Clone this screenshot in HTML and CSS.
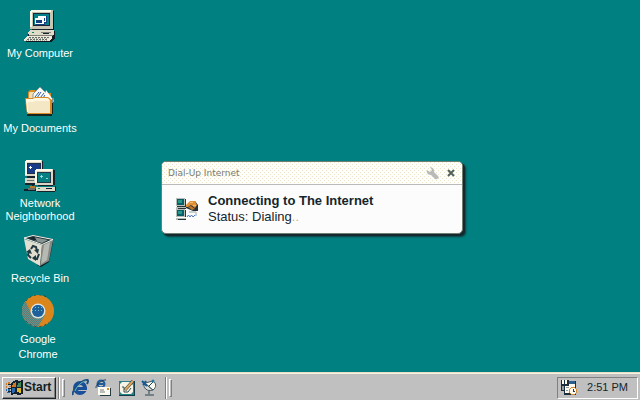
FILE: index.html
```html
<!DOCTYPE html>
<html lang="en">
<head>
<meta charset="utf-8">
<title>Desktop</title>
<link rel="stylesheet" href="styles.css">
</head>
<body>
<main class="desktop">
  <nav class="shortcuts">
    <a class="shortcut" href="#computer">
      <svg class="icon" viewBox="0 0 32 32" shape-rendering="crispEdges">
        <path fill="#111a22" d="M28 1h2v19h-2zM8 19h21v2H8zM30 21h1v7l-4 4H2v-1h24z"/>
        <path fill="#c8c5b5" d="M7 0h21l1 1v18H6V1z"/>
        <path fill="#fbf8ea" d="M7 0h20v2H8v15H6V1z"/>
        <path fill="#1b2430" d="M9 3h17v13H9z"/>
        <path fill="#04808a" d="M10 4h15v11H10z"/>
        <path fill="#14407f" d="M14 6h9v7h-2v2h-9V8h2z"/>
        <path fill="#fff" d="M14 6h8v6h-2v2h-9V8h3z"/>
        <path fill="#14407f" d="M15 8h6v3h-1V8h-5zM12 10h6v3h-6z"/>
        <path fill="#dedbc9" d="M6 20h24v5H4v-3z"/>
        <path fill="#7d8077" d="M17 22h10v1H17zM5 25h24v1H5z"/>
        <path fill="#14202a" d="M19 23h6v1h-6zM3 26h1v-2h1v2zM9 19h15v1H9z"/>
        <path fill="#0b8b58" d="M8 22h2v1H8z"/>
        <path fill="#eeebdd" d="M4 26h24v2l-3 3H0v-2z"/>
        <path stroke="#626b68" stroke-dasharray="2 1" d="M5 27.500h20M3 29.500h20"/>
        <path stroke="#a5a899" stroke-dasharray="1 1" d="M4 28.500h20M2 30.500h22"/>
      </svg>
      <span>My Computer</span>
    </a>
    <a class="shortcut" href="#documents">
      <svg class="icon" viewBox="0 0 32 32">
        <path fill="#15251f" d="M3 29h25v2H3zM27 16h2v13h-2z"/>
        <path fill="#d98a25" d="M4 7l2-2h5l2 3h14v21H4z"/>
        <path fill="#f7ddb0" d="M6 7h5l2 3h12v5H5V8z"/>
        <path fill="#f9f9f5" stroke="#879998" d="M9 9l7-7 12 12-5 4H9z"/>
        <path fill="none" stroke="#315baa" d="M11 12l4-5M13 13l4-6M16 13l4-5M19 13l2-3M22 13l1-2"/>
        <path fill="#fff" d="M22 5l8 11-3 3-6-9z"/>
        <path fill="#d98a25" d="M1 13h8l2-1h13l4 3v14H3z"/>
        <path fill="#f4e7c6" d="M2 14h7l2-1h12l3 2v13H4z"/>
        <path fill="#fff8e1" d="M2 14h7l2-1h12l2 1v2H11l-2 1H4v10H3z"/>
        <path fill="#87908c" d="M28 13h2v2h-1v2h-2v-2h1z"/>
      </svg>
      <span>My Documents</span>
    </a>
    <a class="shortcut" href="#network">
      <svg class="icon" viewBox="0 0 32 32" shape-rendering="crispEdges">
        <path fill="#17212b" d="M18 1h1v17H3v-2h15zM1 23h12v2H1zM8 24h2v4H8zM0 29h14v2H0z"/>
        <path fill="#dad6c6" d="M2 0h16v16H1V1z"/>
        <path fill="#fff9ea" d="M2 0h15v2H3v13H1V1z"/>
        <path fill="#222d48" d="M3 3h14v11H3z"/>
        <path fill="#173c8a" d="M4 4h12v9H4z"/>
        <path fill="#fff" d="M6 6h1v1h1v1H7v1H6V8H5V7h1z"/>
        <path fill="#d7d4c5" d="M1 18h13v5H1z"/>
        <path fill="#6b706b" d="M3 20h7v1H3zM4 28h7v2H4z"/>
        <path fill="#17212b" d="M29 10h2v15h-2zM14 24h15v2H14zM31 26h1v5l-2 1H13v-1h17z"/>
        <path fill="#dad6c6" d="M12 9h17v16H11V10z"/>
        <path fill="#fff9ea" d="M12 9h16v2H13v12h-2V10z"/>
        <path fill="#203b48" d="M13 12h14v11H13z"/>
        <path fill="#067f82" d="M14 13h12v9H14z"/>
        <path fill="#89dedb" d="M17 15h1v1h1v1h-1v1h-1v-1h-1v-1h1zM22 18h2v1h-2z"/>
        <path fill="#dedac9" d="M12 27h19v4H12z"/>
        <path fill="#17212b" d="M22 28h6v1h-6z"/>
        <path fill="#12935c" d="M14 28h2v1h-2z"/>
        <path fill="#b67a2c" d="M6 26h5v2H6z"/>
      </svg>
      <span>Network<br>Neighborhood</span>
    </a>
    <a class="shortcut" href="#recycle">
      <svg class="icon" viewBox="0 0 32 32">
        <path fill="#111c20" d="M27 8l2-1-4 20-8 5-4-2z"/>
        <path fill="#e2ded0" d="M0 4l18 6-2 21-12-7z"/>
        <path fill="#858a86" d="M18 10l11-5-4 21-9 5z"/>
        <path fill="#b7bab2" d="M20 10l6-3-3 18-6 4z"/>
        <path fill="#25363e" d="M0 3l9-3 20 4-11 6z"/>
        <path fill="#899593" d="M9 2l15 3-6 3-7-2z"/>
        <path fill="#17272d" d="M5 3l5-2 3 5z"/>
        <path fill="none" stroke="#f5f2e9" d="M0 3l9-2.500L29 4.500l-11 5z"/>
        <path fill="none" stroke="#213a42" stroke-width="2" d="M7 14l2-3 3 1 1 4M5 16l-1 4 3 3M9 23l4 1 2-5"/>
        <path fill="#213a42" d="M10 15l5-1-1 5zM2 17l4-3 2 5zM8 23l4-3v6z"/>
      </svg>
      <span>Recycle Bin</span>
    </a>
    <a class="shortcut chrome" href="#chrome">
      <svg class="icon" viewBox="0 0 32 32">
        <defs>
          <pattern id="dither" width="2" height="2" patternUnits="userSpaceOnUse">
            <path fill="#7f8983" d="M0 0h2v2H0z"/><path fill="#49847c" d="M0 0h1v1H0zM1 1h1v1H1z"/>
          </pattern>
          <pattern id="dots" width="3" height="3" patternUnits="userSpaceOnUse">
            <path fill="#1d609a" d="M0 0h3v3H0z"/><path fill="#73bdcc" d="M1 0h1v1H1z"/>
          </pattern>
        </defs>
        <circle cx="16" cy="16" r="16" fill="#db861d"/>
        <path fill="url(#dither)" d="M3.500 6A16 16 0 0 0 16 32l7-12-14-2z"/>
        <path fill="none" stroke="#243f45" stroke-dasharray="2 3" d="M4 6a15.500 15.500 0 0 1 22-3M4 26a15.500 15.500 0 0 0 23 1"/>
        <circle cx="16" cy="16" r="7.500" fill="#dce2df"/>
        <circle cx="16" cy="16" r="6" fill="#1d609a"/>
        <path fill="url(#dots)" d="M10 16a6 6 0 0 1 12 0l-2 2h-8z"/>
      </svg>
      <span>Google<br>Chrome</span>
    </a>
  </nav>

  <section class="dialog" aria-labelledby="dialog-title">
    <header class="titlebar">
      <h1 id="dialog-title">Dial-Up Internet</h1>
      <button type="button" aria-label="Settings">
        <svg width="13" height="13" viewBox="0 0 13 13"><path fill="#b9bbb9" d="M4 0a4 4 0 0 1 4 5l4 4c2 2-1 4-3 3L5 8C2 8 0 6 1 3l3 2 2-2z"/></svg>
      </button>
      <button type="button" aria-label="Close">
        <svg width="8" height="8" viewBox="0 0 8 8"><path fill="none" stroke="#53615b" stroke-width="2" d="M1 1l6 6M7 1L1 7"/></svg>
      </button>
    </header>
    <div class="message">
      <svg class="modem" viewBox="0 0 22 22">
        <path fill="#22383d" d="M1 1h9v8H1zM1 12h9v7H1z"/>
        <path fill="#b9bfb8" d="M0 0h9v8H0zM0 11h9v8H0zM0 9h10v2H0zM0 20h10v2H0z"/>
        <path fill="#075f66" d="M1 1h7v6H1zM1 12h7v6H1z"/>
        <path fill="#26988d" d="M2 2h4v3H2zM2 13h4v3H2z"/>
        <path fill="#263237" d="M2 10h8v1H2zM2 21h8v1H2zM10 8l5-5h4l3 4v6h-5l-7-3z"/>
        <path fill="#e09035" d="M10 7l4-4h5l2 4-2 3-4-3-3 2h-2z"/>
        <path fill="#f2b86b" d="M14 4h3v1h-3zM17 7h3v1h-3z"/>
        <path fill="#b9772f" d="M12 9l3-1 4 3-3 1z"/>
        <path fill="#c9cfcf" d="M13 13h7v2h-7zM19 14h2v4h-2z"/>
        <path fill="none" stroke="#487ac0" d="M11 19l1.500-2 1.500 2 1.500-2 1.500 2 2-2"/>
      </svg>
      <div role="status">
        <h2>Connecting to The Internet</h2>
        <p>Status: Dialing<span class="dots">..</span></p>
      </div>
    </div>
  </section>
</main>

<footer class="taskbar">
  <button class="start" type="button">
    <svg width="17" height="15" viewBox="0 0 17 15" shape-rendering="crispEdges">
      <path fill="#14222c" d="M6 2l4-2 3 1 4-1v14l-4 1-4-1-4 1V3z"/>
      <path fill="#d17824" d="M7 3l3-1v5H6zM0 3h1v2H0zM2 2h2v2H2zM0 6h1v2H0zM3 6h2v1H3z"/>
      <path fill="#438759" d="M12 3l3-1v5h-4z"/>
      <path fill="#286bb0" d="M6 8h3v4l-3 1zM0 9h1v2H0zM2 9h2v2H2zM1 12h3v1H1z"/>
      <path fill="#e5b52b" d="M11 8h4v5l-4-1z"/>
      <path fill="#14222c" d="M2 4h3v1H2zM2 8h3v1H2zM2 11h3v1H2z"/>
    </svg>
    <span>Start</span>
  </button>
  <span class="rule"></span><span class="grip"></span>
  <div class="quick">
    <button type="button" aria-label="Internet Explorer">
      <svg viewBox="0 0 17 17">
        <circle cx="8" cy="9" r="5" fill="none" stroke="#194f99" stroke-width="4"/>
        <path fill="#c0c0c0" d="M9 10h8v2H9z"/><path fill="#194f99" d="M5 8h10v3H5z"/>
        <path fill="none" stroke="#1d4f7d" stroke-width="2" d="M1 16c-2-4 8-14 13-15 3-1 2 2 1 4"/>
        <path fill="none" stroke="#62bccb" d="M3 12C5 7 9 3 14 2"/>
      </svg>
    </button>
    <button type="button" aria-label="Outlook Express">
      <svg viewBox="0 0 17 17">
        <circle cx="6" cy="5" r="3.500" fill="none" stroke="#205d9a" stroke-width="2"/>
        <path stroke="#205d9a" stroke-width="2" d="M3 5h7"/>
        <path fill="none" stroke="#203c56" d="M1 9C0 6 8 0 11 1"/>
        <path fill="#253b43" d="M4 9h12v8H5v-2H4z"/><path fill="#fffaf0" d="M3 8h12v8H3z"/>
        <path fill="none" stroke="#75807e" d="M5 11h4M5 13h5"/><path fill="#d48b30" d="M12 9h2v2h-2z"/>
      </svg>
    </button>
    <button type="button" aria-label="Show Desktop">
      <svg viewBox="0 0 17 17">
        <path fill="#153a48" d="M1 2h16v15H1z"/><path fill="#26818b" d="M1 2h15v14H1z"/>
        <path fill="#f7f4e6" d="M2 5l2-2h8l3 3v7l-2 2H4l-2-2z"/>
        <path stroke="#273d42" stroke-width="3" d="M7 11l8-9"/>
        <path stroke="#e0a45b" stroke-width="2" d="M7 11l8-9"/>
        <path fill="none" stroke="#344a4f" d="M4 8h2v5h4l3-4"/>
      </svg>
    </button>
    <button type="button" aria-label="View Channels">
      <svg viewBox="0 0 17 17">
        <path fill="#d9dcda" stroke="#43565c" d="M3 4c-1 5 3 9 9 7z"/>
        <path fill="#fafaf2" stroke="#43565c" d="M4 4l8 7c4-3 3-7 0-9z"/>
        <path fill="none" stroke="#26404a" d="M8 7l5-5M8 12v3M4 16h9"/>
        <path fill="none" stroke="#175b93" stroke-width="2" d="M1 2l5 5M5 2L2 6"/>
        <circle cx="12" cy="2" r="1.500" fill="#25789f"/>
      </svg>
    </button>
  </div>
  <span class="rule"></span><span class="grip"></span>
  <div class="tray">
    <svg width="17" height="17" viewBox="0 0 17 17" shape-rendering="crispEdges">
      <path fill="#1c2d3c" d="M0 1h8v1h7v14H3v-4H0z"/>
      <path fill="#fff9ed" d="M1 1h2v4H1zM4 1h2v4H4zM8 5h6v9H4V7h4z"/>
      <path fill="#2d6088" d="M8 2h6v3H8z"/><path fill="#929c9e" d="M1 7h2v4H1zM5 8h3v1H5zM5 11h2v1H5z"/>
      <circle cx="12" cy="12" r="4" fill="#d08a34"/>
      <circle cx="12" cy="12" r="3" fill="#fff9ed"/>
      <path fill="none" stroke="#273942" d="M12 10v2h2"/>
    </svg>
    <time datetime="14:51">2:51 PM</time>
  </div>
</footer>
</body>
</html>
```
FILE: styles.css
```css
* {
  box-sizing: border-box;
}

body {
  display: flex;
  flex-direction: column;
  min-height: 100vh;
  margin: 0;
  background: #008080;
  font: 11px/13px "Liberation Sans", Arial, sans-serif;
}

button {
  padding: 0;
  border: 0;
  background: none;
  color: inherit;
  font: inherit;
}

svg {
  display: block;
  flex: none;
}

h1, h2, p {
  margin: 0;
}

.desktop {
  position: relative;
  flex: 1;
}

.shortcuts {
  display: flex;
  flex-direction: column;
  width: 80px;
  padding-top: 10px;
}

.shortcut {
  display: flex;
  flex-direction: column;
  align-items: center;
  gap: 5px;
  min-height: 75px;
  color: #fff;
  text-align: center;
  text-decoration: none;
}

.shortcut .icon {
  width: 32px;
  height: 32px;
}

.chrome {
  width: 76px;
  margin-top: -15px;
  line-height: 15px;
}

.dialog {
  position: absolute;
  top: 161px;
  left: 161px;
  width: 302px;
  overflow: hidden;
  border: 1px solid #6f7d72;
  border-radius: 5px;
  background: #fcfcfc;
  box-shadow: 2px 2px 0 #142a2e, 3px 3px 2px #103b40;
}

.titlebar {
  display: flex;
  align-items: center;
  gap: 8px;
  height: 23px;
  padding: 0 7px 0 6px;
  border-bottom: 1px solid #b9bbb9;
  background-color: #fefefc;
  background-image:
    conic-gradient(at 1px 1px, transparent 75%, #ece5c6 0),
    conic-gradient(at 1px 1px, transparent 75%, #ece5c6 0);
  background-position: 0 0, 2px 2px;
  background-size: 4px 4px;
}

.titlebar h1 {
  flex: 1;
  color: #777b76;
  font: 9px/12px "DejaVu Sans", sans-serif;
}

.message {
  display: flex;
  align-items: flex-start;
  gap: 10px;
  padding: 8px 14px;
  color: #14262b;
  font-size: 13px;
  line-height: 16px;
}

.message h2 {
  font-size: 13px;
}

.modem {
  width: 22px;
  height: 22px;
  margin-top: 5px;
}

.dots {
  color: #d4ad83;
}

.taskbar {
  display: flex;
  align-items: center;
  gap: 2px;
  height: 28px;
  padding: 2px 2px 0;
  border-top: 1px solid #e9dfcc;
  background: #c0c0c0;
  box-shadow: inset 0 1px #f7f0df;
}

.start {
  display: flex;
  align-items: center;
  gap: 1px;
  width: 54px;
  height: 22px;
  padding: 0 3px;
  border: 1px solid;
  border-color: #fff #182428 #182428 #fff;
  box-shadow: inset -1px -1px #808080;
  color: #101f24;
  font-size: 12px;
  font-weight: bold;
}

.rule {
  width: 2px;
  height: 22px;
  border-left: 1px solid #808080;
  border-right: 1px solid #fff;
}

.grip {
  width: 3px;
  height: 18px;
  border: 1px solid;
  border-color: #fff #808080 #808080 #fff;
}

.quick {
  display: flex;
  gap: 6px;
  padding: 0 5px;
}

.quick svg {
  width: 17px;
  height: 17px;
}

.tray {
  display: flex;
  align-items: center;
  justify-content: space-between;
  width: 81px;
  height: 22px;
  margin-left: auto;
  padding: 0 9px 0 3px;
  border: 1px solid;
  border-color: #808080 #fff #fff #808080;
  color: #14262b;
}
```
